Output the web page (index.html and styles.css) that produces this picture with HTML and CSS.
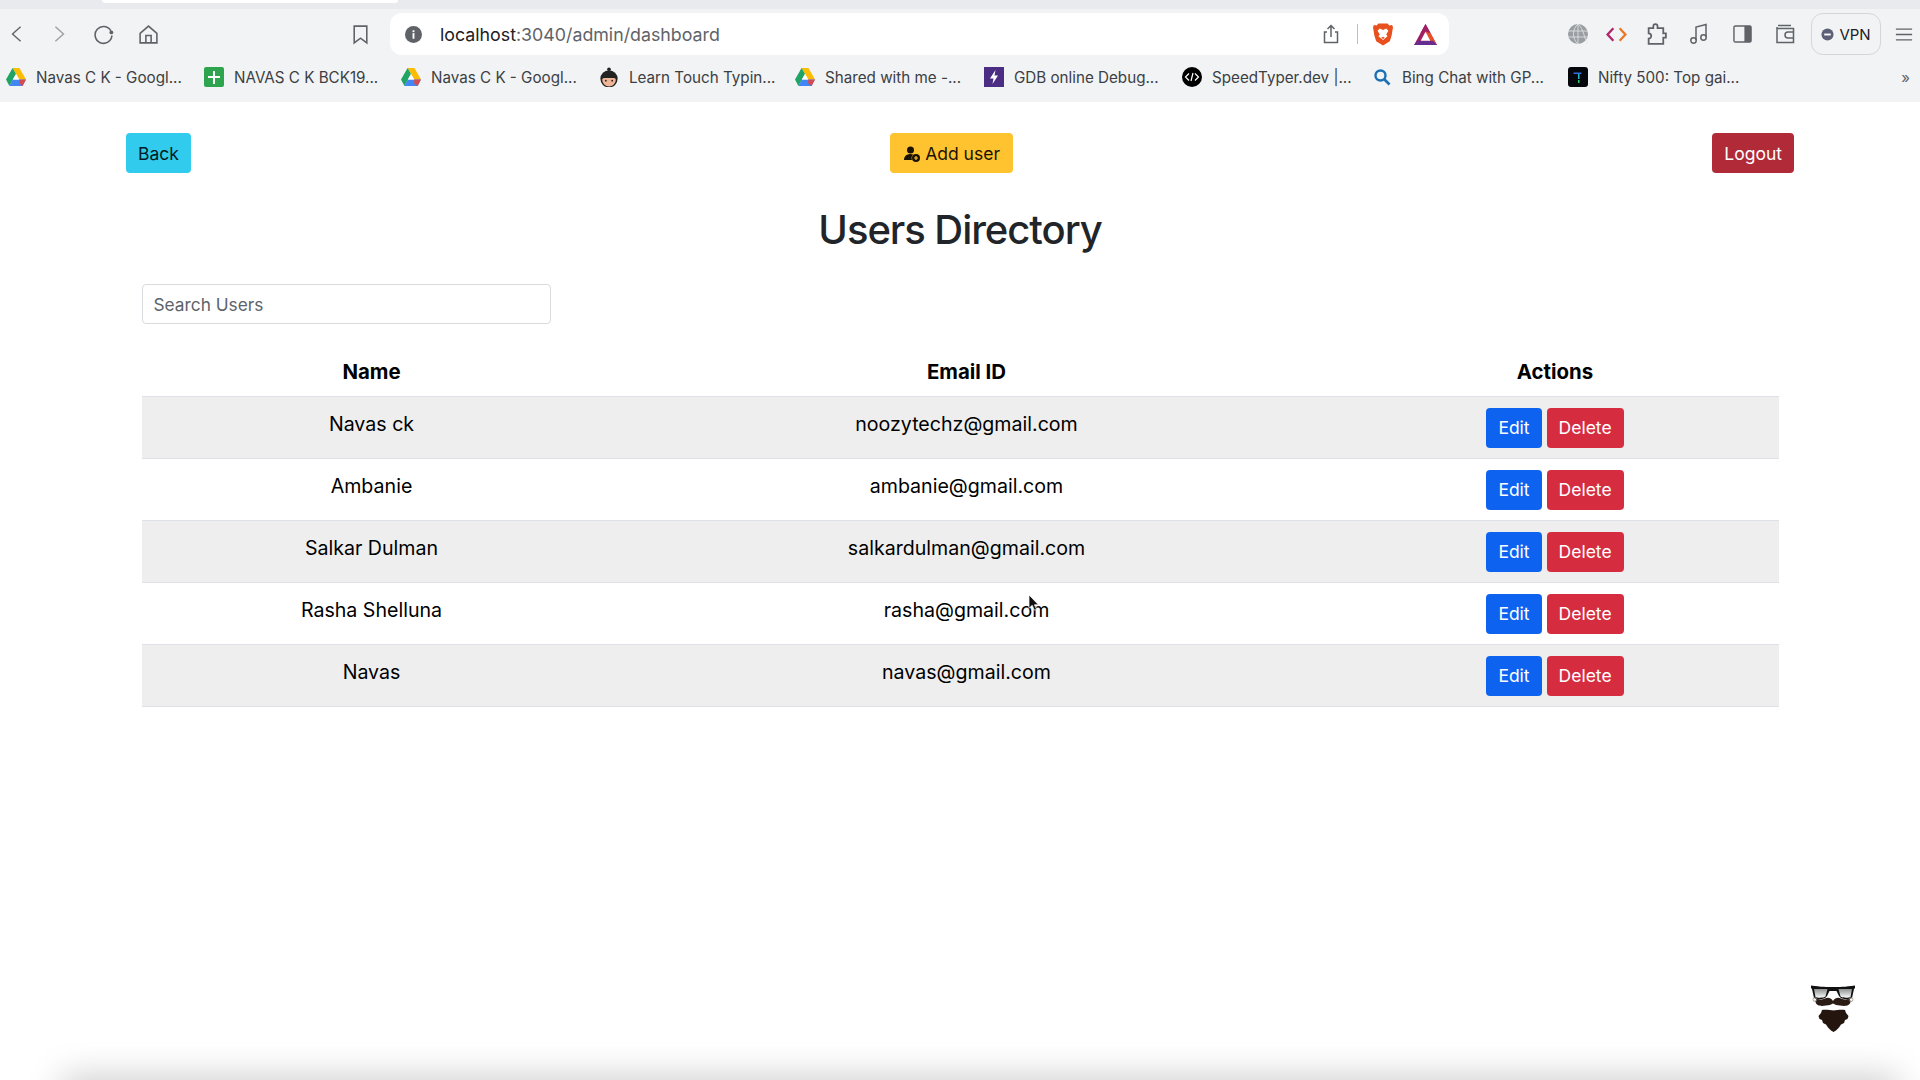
FILE: index.html
```html
<!DOCTYPE html>
<html lang="en">
<head>
<meta charset="utf-8">
<title>Users Directory</title>
<link rel="stylesheet" href="styles.css">
</head>
<body>
<svg class="defs" width="0" height="0" aria-hidden="true">
  <defs>
    <symbol id="drive" viewBox="0 0 20 18">
      <path d="M6.6 0h6.8l6.6 11.6h-6.8z" fill="#fbbc04"/>
      <path d="M6.6 0 0 11.6 3.4 18 10 6z" fill="#1fa463"/>
      <path d="M3.4 18h13.2l3.4-6.4H6.8z" fill="#4285f4"/>
      <path d="M13.2 11.6h6.8l-3.4 6.4-3.4-2.6z" fill="#ea4335" opacity=".85"/>
      <path d="M10 6l3.2 5.6H6.8z" fill="#fff"/>
    </symbol>
    <linearGradient id="lens" x1="0" y1="0" x2="0" y2="1">
      <stop offset="0" stop-color="#8d9091"/>
      <stop offset="1" stop-color="#fbfbfb"/>
    </linearGradient>
  </defs>
</svg>

<header class="chrome">
  <div class="tabstrip"><div class="tab"></div></div>
  <div class="toolbar">
    <div class="nav">
      <svg class="ico nav-back" viewBox="0 0 20 20"><path d="M14 2 5 10l9 8" /></svg>
      <svg class="ico nav-fwd" viewBox="0 0 20 20"><path d="m6 2 9 8-9 8" /></svg>
      <svg class="ico nav-reload" viewBox="0 0 20 20"><path d="M17 6.500A8 8 0 1 0 18 11" /><circle class="solid" cx="17.500" cy="8" r="1.800"/></svg>
      <svg class="ico nav-home" viewBox="0 0 20 20"><path d="M2 9 10 2l8 7v9H2zM7.500 18v-7h5v7" /></svg>
      <svg class="ico nav-mark" viewBox="0 0 20 20"><path d="M4 2h12v16l-6-4.500L4 18z" /></svg>
    </div>
    <div class="address">
      <svg class="info" viewBox="0 0 18 18"><circle cx="9" cy="9" r="9" fill="#5f6368"/><rect x="8" y="7.500" width="2" height="6" fill="#fff"/><rect x="8" y="4.500" width="2" height="2" fill="#fff"/></svg>
      <span class="url">localhost<span class="url-path">:3040/admin/dashboard</span></span>
      <svg class="ico share" viewBox="0 0 20 20"><path d="M6 8H3.500v10.500h13V8H14M10 13V1.500M6.500 5 10 1.500 13.500 5" /></svg>
      <span class="sep"></span>
      <svg class="brave" viewBox="0 0 22 24"><path d="M6 0h10l2 2 3-.5L22 4l-1.500 9-2 6.500L11 24l-7.500-4.500-2-6.500L0 4l1-2.500L4 2z" fill="#e8501f"/><path d="M11 7 7.500 5.500 5 8l2.500 4L6 14l5 4 5-4-1.500-2L17 8l-2.500-2.500z" fill="#fff"/><path d="M11 14.500 9 15.500l2 1.500 2-1.500z" fill="#e8501f"/></svg>
      <svg class="bat" viewBox="0 0 24 22"><path d="M12 0 0 22h24z" fill="#9e1f63"/><path d="M12 0 6.500 10 12 7.500 17.500 10z" fill="#9e1f63"/><path d="M12 7.500 17.500 10 24 22h-7z" fill="#e8502a"/><path d="M0 22h24l-4-4.500H4z" fill="#662d91"/><path d="M12 8 7 17.500h10z" fill="#fff"/></svg>
    </div>
    <div class="tools">
      <svg class="globe" viewBox="0 0 20 20"><circle cx="10" cy="10" r="10" fill="#9a9da1"/><path d="M0 7h20M0 13h20M10 0v20M10 0C4 5 4 15 10 20M10 0c6 5 6 15 10 20" stroke="#e6e8ea" stroke-width=".8" fill="none"/></svg>
      <svg class="code" viewBox="0 0 20 16"><path d="M7 2 1.500 8 7 14" stroke="#b0256e" stroke-width="2.200" fill="none"/><path d="m13 2 5.500 6-5.500 6" stroke="#e8792b" stroke-width="2.200" fill="none"/></svg>
      <svg class="ico puzzle" viewBox="0 0 20 22"><path d="M2 5h4.500V3a2 2 0 0 1 4 0v2H16v5h2.500v4H16v6H2v-5a2.500 2.500 0 0 0 0-5z" /></svg>
      <svg class="ico music" viewBox="0 0 20 22"><path d="M7 17V4l10-2.500V14" /><circle cx="4.500" cy="17.500" r="2.700"/><circle cx="14.500" cy="14.500" r="2.700"/></svg>
      <svg class="ico side" viewBox="0 0 20 20"><rect x="1" y="1.500" width="18" height="17" rx="1.500"/><rect class="solid" x="12" y="1.500" width="7" height="17"/></svg>
      <svg class="ico wallet" viewBox="0 0 20 20"><path d="M3 1.500h13M2 4.500h16.500v14H2zM2 4.500V3M18.500 8H13a3 3 0 0 0 0 6h5.500" /></svg>
      <div class="vpn"><svg class="vpn-dot" viewBox="0 0 14 14"><circle cx="7" cy="7" r="6.500" fill="#5d6178"/><rect x="3.500" y="6" width="7" height="2" fill="#fff"/></svg><span>VPN</span></div>
      <svg class="ico menu" viewBox="0 0 20 16"><path d="M1 2h18M1 8h18M1 14h18" /></svg>
    </div>
  </div>
  <nav class="bookmarks">
    <div class="mark"><svg class="fav"><use href="#drive"/></svg><span>Navas C K - Googl...</span></div>
    <div class="mark"><svg class="fav" viewBox="0 0 20 20"><rect width="20" height="20" rx="2" fill="#2ea44f"/><path d="M9 4h2v5h5v2h-5v6H9v-6H4V9h5z" fill="#fff"/></svg><span>NAVAS C K BCK19...</span></div>
    <div class="mark"><svg class="fav"><use href="#drive"/></svg><span>Navas C K - Googl...</span></div>
    <div class="mark"><svg class="fav" viewBox="0 0 20 22"><circle cx="10" cy="2.500" r="2" fill="#222"/><circle cx="10" cy="13" r="9.500" fill="#222"/><path d="M2.500 14a7.500 7.500 0 0 0 15 0c0-1-1-2-2-2H4.500c-1 0-2 1-2 2z" fill="#f0b598"/><circle cx="6.500" cy="15" r="1" fill="#222"/><circle cx="13.500" cy="15" r="1" fill="#222"/></svg><span>Learn Touch Typin...</span></div>
    <div class="mark"><svg class="fav"><use href="#drive"/></svg><span>Shared with me -...</span></div>
    <div class="mark"><svg class="fav" viewBox="0 0 20 20"><rect width="20" height="20" fill="#4b2e83"/><path d="M11.500 3 6 11.500h3.500L8.500 17 14 8.500h-3.500z" fill="#fff"/></svg><span>GDB online Debug...</span></div>
    <div class="mark"><svg class="fav" viewBox="0 0 20 20"><circle cx="10" cy="10" r="10" fill="#000"/><path d="M7 6.500 3.500 10 7 13.500M13 6.500l3.500 3.500-3.500 3.500M11 6l-2 8" stroke="#fff" stroke-width="1.200" fill="none"/></svg><span>SpeedTyper.dev |...</span></div>
    <div class="mark"><svg class="fav" viewBox="0 0 20 20"><circle cx="8.500" cy="8.500" r="5" stroke="#1a6fb5" stroke-width="2.400" fill="none"/><path d="m12.500 12.500 5 5" stroke="#1a6fb5" stroke-width="2.600"/></svg><span>Bing Chat with GP...</span></div>
    <div class="mark"><svg class="fav" viewBox="0 0 20 20"><rect width="20" height="20" rx="3" fill="#05070d"/><path d="M5.500 5.500h8v1.500h-8z" fill="#2f6fe0"/><path d="M10 7h1.500v5H10z" fill="#22b8c8"/><path d="M10 13h1.500v3H10z" fill="#2ecc71"/></svg><span>Nifty 500: Top gai...</span></div>
    <div class="more">»</div>
  </nav>
</header>

<main class="page">
  <div class="actions-bar">
    <button class="btn btn-info">Back</button>
    <button class="btn btn-warning"><svg class="add-icon" viewBox="0 0 16 16"><circle cx="6.500" cy="4" r="3.500" fill="#1a1300"/><path d="M0 14c0-4 3-6 6.500-6 1 0 2 .2 2.700.5A5 5 0 0 0 8 14z" fill="#1a1300"/><circle cx="12" cy="12" r="4" fill="#1a1300"/><path d="M12 10v4M10 12h4" stroke="#ffc32f" stroke-width="1.200"/></svg> Add user</button>
    <button class="btn btn-danger-dark">Logout</button>
  </div>
  <h1 class="title">Users Directory</h1>
  <div class="content">
    <input class="search" type="text" placeholder="Search Users">
    <table class="users">
      <colgroup><col class="col-name"><col class="col-email"><col class="col-actions"></colgroup>
      <thead>
        <tr><th>Name</th><th>Email ID</th><th>Actions</th></tr>
      </thead>
      <tbody>
        <tr><td>Navas ck</td><td>noozytechz@gmail.com</td><td class="row-actions"><button class="btn btn-primary">Edit</button><button class="btn btn-danger">Delete</button></td></tr>
        <tr><td>Ambanie</td><td>ambanie@gmail.com</td><td class="row-actions"><button class="btn btn-primary">Edit</button><button class="btn btn-danger">Delete</button></td></tr>
        <tr><td>Salkar Dulman</td><td>salkardulman@gmail.com</td><td class="row-actions"><button class="btn btn-primary">Edit</button><button class="btn btn-danger">Delete</button></td></tr>
        <tr><td>Rasha Shelluna</td><td>rasha@gmail.com</td><td class="row-actions"><button class="btn btn-primary">Edit</button><button class="btn btn-danger">Delete</button></td></tr>
        <tr><td>Navas</td><td>navas@gmail.com</td><td class="row-actions"><button class="btn btn-primary">Edit</button><button class="btn btn-danger">Delete</button></td></tr>
      </tbody>
    </table>
  </div>
</main>

<svg class="cursor" viewBox="0 0 12 20"><path d="M1 1v15l3.500-3.500L7 18l2.500-1-2.500-5h4.500z" fill="#111" stroke="#fff" stroke-width=".8"/></svg>

<svg class="logo" viewBox="0 0 44 48">
  <path d="M0 1.500C10 3 16 3 22 3s12 0 22-1.500V4l-1 1-2 9c-4 2-11 1.500-13-2l-2.500-5h-7L16 12c-2 3.500-9 4-13 2L1 5 0 4z" fill="#111"/>
  <path d="M3 5h13.500L14.500 12.500c-2 1.500-8 1.500-10 .5zM27.500 5H41l-1.500 8c-2 1-8 1-10-.5z" fill="url(#lens)"/>
  <path d="M22 17c2-3 5-4 8-2.500 3 1.500 6 1.500 8-.5 2 2 2 5 0 6.500-3 2-6 1.500-9 1-3 0-5-1-7-2-2 1-4 2-7 2-3 .5-6 1-9-1-2-1.500-2-4.500 0-6.500 2 2 5 2 8 .5 3-1.500 6-.5 8 2.500z" fill="#2a1c14"/>
  <circle cx="4" cy="15.500" r="2" fill="none" stroke="#8a7f78" stroke-width=".7"/>
  <circle cx="40" cy="15.500" r="2" fill="none" stroke="#8a7f78" stroke-width=".7"/>
  <path d="M22 26.500c4-.5 9-1 12-.5l1 3 2.500 3-1 3-2.500 1-1 3-3 1.500-2 3-3 3-2.500 1.500-2.500-1.500-3-3-2-3-3-1.500-1-3-2.500-1-1-3 2.500-3 1-3c3-.5 8 0 12 .5z" fill="#24160f"/>
</svg>

<div class="bottom-shade"></div>
</body>
</html>
```
FILE: styles.css
```css
* { box-sizing: border-box; }
html, body { margin: 0; height: 1080px; overflow: hidden; background: #fff; }
body { font-family: Inter, "Noto Sans", sans-serif; color: #000; position: relative; }
.defs { position: absolute; }

.chrome { background: #f1f3f5; height: 102px; }
.tabstrip { height: 9px; background: #e8eaed; }
.tab { width: 296px; height: 3px; margin-left: 102px; background: #fff; border-radius: 0 0 6px 6px; }

.toolbar { display: flex; align-items: center; height: 50px; }
.ico { fill: none; stroke: #5f6368; stroke-width: 1.500; }
.ico .solid, .solid { fill: #5f6368; stroke: none; }

.nav { width: 390px; flex: none; display: flex; align-items: center; position: relative; height: 100%; }
.nav svg { flex: none; }
.nav-back { width: 18px; height: 20px; margin-left: 8px; }
.nav-fwd { width: 18px; height: 20px; margin-left: 24px; stroke: #9a9da1; }
.nav-reload { width: 21px; height: 21px; margin-left: 25px; }
.nav-home { width: 21px; height: 21px; margin-left: 24px; }
.nav-mark { width: 21px; height: 21px; margin-left: 191px; }

.address { width: 1059px; flex: none; height: 42px; background: #fff; border-radius: 12px; display: flex; align-items: center; padding-left: 15px; }
.info { width: 17px; height: 17px; flex: none; }
.url { font-size: 17.800px; color: #202124; margin-left: 18px; flex: 1; }
.url-path { color: #5f6368; }
.share { width: 20px; height: 22px; flex: none; }
.sep { width: 1px; height: 20px; background: #bcc0c4; margin-left: 16px; flex: none; }
.brave { width: 20px; height: 23px; margin-left: 15px; flex: none; }
.bat { width: 23px; height: 21px; margin-left: 21px; margin-right: 12px; flex: none; }

.tools { flex: 1; display: flex; align-items: center; position: relative; height: 100%; padding-left: 118px; }
.tools svg { flex: none; }
.globe { width: 20px; height: 20px; margin-left: 1px; }
.code { width: 21px; height: 17px; margin-left: 18px; }
.puzzle { width: 22px; height: 23px; margin-left: 19px; stroke-width: 1.700; }
.music { width: 20px; height: 22px; margin-left: 21px; }
.side { width: 19px; height: 20px; margin-left: 24px; }
.wallet { width: 20px; height: 20px; margin-left: 23px; }
.vpn { width: 70px; height: 42px; border: 1px solid #d3d6da; border-radius: 12px; margin-left: 16px; display: flex; align-items: center; justify-content: center; gap: 5px; font-size: 15px; color: #202124; flex: none; }
.vpn-dot { width: 13px; height: 13px; }
.menu { width: 18px; height: 15px; margin-left: 14px; }

.bookmarks { height: 36px; display: grid; grid-template-columns: 198px 197px 198px 196px 189px 198px 190px 196px 317px 1fr; align-items: center; padding-left: 6px; }
.mark { display: flex; align-items: center; gap: 10px; font-size: 15.200px; color: #3c4043; white-space: nowrap; }
.fav { width: 20px; height: 20px; flex: none; }
.more { font-size: 15px; color: #5f6368; text-align: right; padding-right: 10px; }

.page { padding: 31px 126px 0; }
.actions-bar { display: flex; justify-content: space-between; }
.btn { height: 40px; border: 1px solid transparent; border-radius: 4px; padding: 1px 11px 0; font: 400 17.500px/1 Inter, "Noto Sans", sans-serif; color: #fff; }
.btn-info { background: #31cbed; color: #001a24; }
.btn-warning { background: #ffc32f; color: #1a1300; display: flex; align-items: center; gap: 5px; padding: 1px 12px 0 13px; }
.btn-danger-dark { background: #b02a37; }
.btn-primary { background: #0d63f0; }
.btn-danger { background: #d62c40; }
.add-icon { width: 16px; height: 16px; }

.title { font-size: 40px; font-weight: 500; line-height: 48px; color: #212529; text-align: center; margin: 33px 0 30px; letter-spacing: -1.050px; }

.content { padding: 0 15px 0 15.500px; }
.search { display: block; width: 409px; height: 40px; border: 1px solid #d9dcdf; border-radius: 4px; padding: 1px 11px 0; font: 400 17.300px Inter, "Noto Sans", sans-serif; outline: none; }
.search::placeholder { color: #5c636a; opacity: 1; }

.users { width: 1637px; table-layout: fixed; border-collapse: collapse; margin-top: 19px; font-size: 19.600px; text-align: center; }
.col-name { width: 460px; }
.col-email { width: 730px; }
.col-actions { width: 447px; }
.users th { height: 53px; font-weight: 700; border-bottom: 1px solid #dee2e6; padding: 4px 0 0; font-size: 20.400px; }
.users td { height: 62px; padding: 16px 0 0; vertical-align: top; border-bottom: 1px solid #dee2e6; line-height: 23px; }
.users tbody tr:nth-child(odd) { background: #eeeeee; }
.users td.row-actions { padding: 11px 0 0; }
.row-actions .btn { margin: 0 2.500px; vertical-align: top; }

.cursor { position: absolute; left: 1028px; top: 594px; width: 11px; height: 18px; }
.logo { position: absolute; left: 1811px; top: 984px; width: 44px; height: 48px; }
.bottom-shade { position: absolute; left: 70px; right: 30px; top: 1086px; height: 20px; box-shadow: 0 0 36px 8px rgba(0, 0, 0, .22); }
```
